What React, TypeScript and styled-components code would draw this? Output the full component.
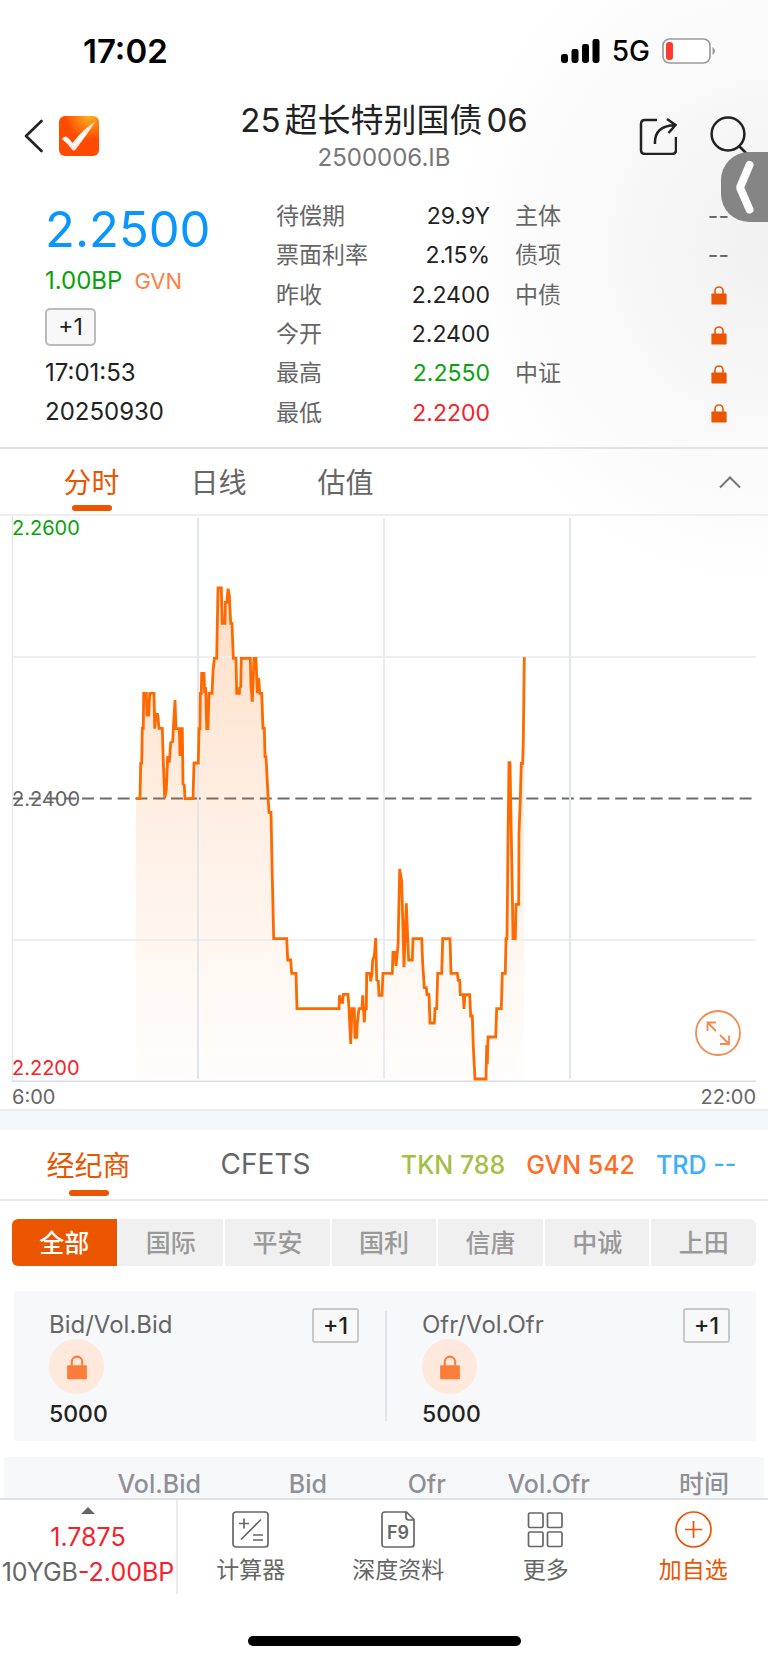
import React from 'react';
import styled, { createGlobalStyle } from 'styled-components';

const GlobalStyle = createGlobalStyle`
  * { box-sizing: border-box; }
  body {
    margin: 0;
    background: #fff;
    font-family: Inter, "Noto Sans CJK SC", sans-serif;
    color: #222;
  }
  button {
    margin: 0;
    padding: 0;
    border: 0;
    background: none;
    font: inherit;
    color: inherit;
    cursor: pointer;
  }
  svg { display: block; }
  dl, dt, dd, h1, p { margin: 0; font-weight: 400; }
`;

const ORANGE = '#eb5500';
const GREEN = '#08a30c';
const RED = '#f5222a';
const GREY = '#666';

const Shell = styled.div`
  position: relative;
  display: flex;
  flex-direction: column;
  height: 100vh;
  overflow: hidden;
  background: radial-gradient(ellipse 320px 340px at 100% 250px, #f1f1f1, #f7f7f7 40%, #fff 100%), #fff;
`;

const Content = styled.main`
  flex: 1;
  min-height: 0;
  overflow: hidden;
`;

const StatusBar = styled.div`
  display: flex;
  align-items: center;
  justify-content: space-between;
  height: 100px;
  padding: 2px 52px 0 83px;
  color: #000;
`;

const Clock = styled.time`
  font-size: 33px;
  font-weight: 600;
`;

const StatusIcons = styled.div`
  display: flex;
  align-items: center;
  gap: 12px;
  font-size: 28px;
  font-weight: 500;
`;

const Header = styled.header`
  display: grid;
  grid-template-columns: 1fr auto 1fr;
  align-items: center;
  height: 78px;
  padding: 0 18px;
`;

const HeaderSide = styled.div<{ $end?: boolean }>`
  display: flex;
  align-items: center;
  justify-content: ${(p) => (p.$end ? 'flex-end' : 'flex-start')};
  gap: ${(p) => (p.$end ? 33 : 16)}px;
  padding: 0 0 6px ${(p) => (p.$end ? 0 : 5)}px;
`;

const TitleBlock = styled.div`
  padding-bottom: 3px;
  text-align: center;
`;

const Title = styled.h1`
  display: flex;
  gap: 4px;
  font-size: 33px;
  line-height: 40px;
`;

const Code = styled.p`
  font-size: 24px;
  line-height: 35px;
  color: #777;
`;

const DrawerHandle = styled.button`
  position: absolute;
  top: 152px;
  right: 0;
  width: 47px;
  height: 70px;
  border-radius: 28px 0 0 28px;
  background: #858585;
`;

const Quote = styled.section`
  display: grid;
  grid-template-columns: 206px 1fr 1fr;
  column-gap: 25px;
  padding: 19px 39px 14px 45px;
  border-bottom: 2px solid #e2e2ea;
  font-size: 23px;
  line-height: 39px;
`;

const PriceColumn = styled.div`
  padding-top: 3px;
  font-size: 24px;
`;

const Price = styled.div`
  font-size: 49px;
  line-height: 60px;
  color: #0a96ff;
`;

const ChangeRow = styled.div`
  display: flex;
  gap: 12px;
  height: 48px;
  line-height: 42px;
  color: ${GREEN};
`;

const Side = styled.span`
  font-size: 22px;
  color: #ff7f45;
`;

const SettleButton = styled.button<{ $small?: boolean }>`
  display: block;
  width: ${(p) => (p.$small ? 47 : 51)}px;
  height: ${(p) => (p.$small ? 35 : 38)}px;
  border: 2px solid ${(p) => (p.$small ? '#c8c8c8' : '#bbb')};
  border-radius: ${(p) => (p.$small ? 3 : 5)}px;
  background: #f8f8f8;
  font-size: 23px;
  font-weight: ${(p) => (p.$small ? 500 : 400)};
  line-height: 30px;
  color: #222;
`;

const Stamp = styled.div`
  padding: 7px 0 2px;
`;

const Stats = styled.dl`
  display: grid;
  grid-auto-rows: 1fr;
`;

const StatRow = styled.div`
  display: flex;
  align-items: center;
  justify-content: space-between;
`;

const StatName = styled.dt`
  color: ${GREY};
`;

const StatValue = styled.dd<{ $color?: string }>`
  color: ${(p) => p.$color ?? '#222'};
`;

const ChartTabs = styled.div`
  display: flex;
  align-items: center;
  height: 67px;
  padding: 0 26px 0 28px;
  border-bottom: 2px solid #eee;
`;

const Tab = styled.button<{ $active?: boolean; $width: number }>`
  position: relative;
  width: ${(p) => p.$width}px;
  height: 100%;
  padding-bottom: 1px;
  font-size: 28px;
  color: ${(p) => (p.$active ? ORANGE : GREY)};
  &::after {
    content: '';
    display: ${(p) => (p.$active ? 'block' : 'none')};
    position: absolute;
    left: 50%;
    bottom: 3px;
    width: 40px;
    height: 6px;
    margin-left: -20px;
    border-radius: 3px;
    background: ${ORANGE};
  }
`;

const Collapse = styled.button`
  margin-left: auto;
`;

const ChartSection = styled.section`
  padding: 0 12px;
  font-size: 20px;
`;

const Plot = styled.div`
  position: relative;
  svg.plot { width: 100%; height: 566px; }
`;

const AxisLabel = styled.span<{ $at: 'top' | 'middle' | 'bottom'; $color: string }>`
  position: absolute;
  left: 0;
  top: ${(p) => ({ top: '0', middle: '50%', bottom: 'auto' })[p.$at]};
  bottom: ${(p) => (p.$at === 'bottom' ? '2px' : 'auto')};
  margin-top: ${(p) => (p.$at === 'middle' ? -12 : 0)}px;
  line-height: 24px;
  color: ${(p) => p.$color};
`;

const ExpandButton = styled.button`
  position: absolute;
  right: 15px;
  bottom: 26px;
`;

const TimeAxis = styled.div`
  display: flex;
  justify-content: space-between;
  padding-top: 3px;
  line-height: 24px;
  color: ${GREY};
`;

const Divider = styled.div`
  height: 21px;
  border-top: 2px solid #ebecef;
  background: #f6f7fa;
`;

const BrokerTabs = styled.div`
  display: flex;
  align-items: center;
  height: 71px;
  padding-right: 22px;
  border-bottom: 2px solid #ececec;
`;

const Counts = styled.div`
  display: flex;
  gap: 21px;
  margin-left: auto;
  font-size: 25px;
  font-weight: 500;
`;

const Count = styled.span<{ $color: string }>`
  min-width: 90px;
  color: ${(p) => p.$color};
`;

const Chips = styled.div`
  display: grid;
  grid-template-columns: repeat(7, 1fr);
  gap: 2px;
  margin: 18px 12px 25px;
  border-radius: 6px;
  overflow: hidden;
`;

const Chip = styled.button<{ $active?: boolean }>`
  height: 47px;
  padding-bottom: 3px;
  background: ${(p) => (p.$active ? ORANGE : '#f0f0f0')};
  font-size: 25px;
  font-weight: 500;
  color: ${(p) => (p.$active ? '#fff' : '#999')};
`;

const BestQuotes = styled.section`
  display: grid;
  grid-template-columns: 1fr 1fr;
  margin: 0 12px 16px 14px;
  padding: 20px 0;
  background: #f7f8fa;
  color: #222;
`;

const BestQuote = styled.div`
  display: grid;
  grid-template-columns: 1fr auto;
  height: 110px;
  padding: 0 26px 0 35px;
  & + & { border-left: 2px solid #e3e4e8; }
`;

const BestName = styled.span`
  font-size: 24px;
  line-height: 28px;
  color: ${GREY};
`;

const BestButtonCell = styled.div`
  height: 28px;
  margin-top: -3px;
`;

const LockBadge = styled.span`
  grid-column: 1 / -1;
  display: grid;
  place-items: center;
  width: 55px;
  height: 55px;
  border-radius: 50%;
  background: #ffe8dc;
`;

const Volume = styled.span`
  grid-column: 1 / -1;
  font-size: 23px;
  font-weight: 500;
  line-height: 27px;
  padding-top: 7px;
`;

const Deals = styled.table`
  width: calc(100% - 8px);
  margin: 0 4px;
  table-layout: fixed;
  border-collapse: collapse;
  background: #f7f8fa;
`;

const DealHead = styled.th<{ $width?: number }>`
  width: ${(p) => (p.$width ? `${p.$width}px` : 'auto')};
  height: 41px;
  padding: 15px 0 2px;
  text-align: right;
  font-size: 25px;
  font-weight: 500;
  line-height: 24px;
  color: #8f9096;
  &:last-child { padding-right: 35px; }
`;

const Footer = styled.footer`
  border-top: 2px solid #dfe0e6;
  background: #fff;
`;

const Toolbar = styled.nav`
  display: grid;
  grid-template-columns: 178px repeat(4, 1fr);
  height: 94px;
`;

const Ticker = styled.button`
  display: flex;
  flex-direction: column;
  align-items: center;
  padding-top: 7px;
  border-right: 2px solid #ececef;
  font-size: 25px;
  line-height: 35px;
  color: ${RED};
  white-space: nowrap;
  svg { margin-bottom: 6px; }
  span { color: ${GREY}; }
`;

const Tool = styled.button<{ $accent?: boolean }>`
  display: flex;
  flex-direction: column;
  align-items: center;
  padding: 11px 2px 0 0;
  font-size: 23px;
  line-height: 44px;
  color: ${(p) => (p.$accent ? ORANGE : GREY)};
`;

const HomeArea = styled.div`
  display: flex;
  justify-content: center;
  padding: 42px 0 17px;
`;

const HomeIndicator = styled.div`
  width: 273px;
  height: 10px;
  border-radius: 5px;
  background: #000;
`;

const Lock = ({ width = 20, color = ORANGE }: { width?: number; color?: string }) => (
  <svg width={width} height={width} viewBox="0 0 20 20">
    <path d="M6 9V6a4 4 0 0 1 8 0v3" fill="none" stroke={color} strokeWidth="1.6" />
    <rect x="2.4" y="8.6" width="15.2" height="10.8" rx="0.6" fill={color} />
  </svg>
);

const SERIES: [number, number][] = [
  [136, 798.7], [140, 798.7], [140.7, 763.3], [141.7, 763.3], [142.3, 728.3], [143.3, 728.3],
  [143.7, 693.3], [146.3, 693.3], [147, 715], [148.7, 715], [149.7, 693.3], [154, 693.3],
  [154.7, 728.7], [156, 714.3], [157.7, 714.3], [159, 728.3], [162.3, 728.3], [163.3, 761.7],
  [164.7, 798], [166.3, 790], [167.7, 756], [169.3, 762.7], [170.7, 742.7], [172.7, 741.7],
  [173.3, 728.7], [175, 700], [176, 728.7], [179.3, 728.7], [180, 756], [181.3, 728.7],
  [182.3, 728.7], [183, 784], [184.3, 785.3], [185, 798.7], [193, 798.7], [194, 763],
  [198.3, 763], [199, 728.7], [200, 728.7], [200.3, 693.3], [201.3, 693.3], [201.7, 673.3],
  [204, 673.3], [204.7, 693.3], [205.7, 687], [206.7, 728.7], [208, 728.7], [209, 693.3],
  [212, 693.3], [213, 671.7], [214.3, 658.3], [216.7, 658.3], [218, 588], [221.3, 588],
  [222.3, 623.3], [225, 623.3], [225.3, 602.3], [227, 602.3], [228, 588.7], [229.3, 595],
  [230.7, 623.3], [232, 623.3], [233.3, 658.3], [236, 658.3], [236.7, 693.3], [239.3, 693.3],
  [239.7, 687.7], [240.7, 686.7], [241.3, 658.3], [250.3, 658.3], [251, 686.7], [252.3, 701.7],
  [254, 658.3], [256, 658.3], [257.3, 693.3], [258.7, 678], [259.7, 693.3], [261.7, 693.3],
  [263, 728.3], [264.3, 728.3], [265, 756.7], [266, 756.7], [268.2, 798.7], [269, 812.3],
  [271, 812.3], [272, 863.3], [273.7, 938.7], [286.7, 938.7], [287.7, 960], [290.7, 960],
  [291.7, 973.3], [296, 973.3], [297, 1008.7], [339, 1008.7], [339.5, 995.3], [341, 1002.3],
  [342.7, 1002.3], [343.3, 994.3], [348, 994.3], [349, 1008.7], [350.7, 1044], [352, 1008.7],
  [354.3, 1008.7], [355, 1037.3], [356.7, 1037.3], [357.3, 1023.3], [359, 1008.7],
  [362, 1008.7], [362.7, 995.3], [364.3, 1022.3], [365, 1008.7], [366.3, 1008.7],
  [366.7, 973.3], [370, 973.3], [370.7, 981.3], [372, 973.3], [372.7, 960], [374.3, 956],
  [375.7, 938], [376.7, 980], [378.3, 981], [379, 995.3], [382, 995.3], [383, 973.3],
  [392.3, 973.3], [393, 952.3], [395, 952.3], [396, 966], [397.3, 952.3], [398, 946],
  [399.7, 869], [401.7, 881.7], [404, 967.3], [406.3, 903.3], [407.7, 938.7], [408.7, 960],
  [412.3, 960], [413, 938.7], [421.7, 938.7], [422.7, 963.3], [424.3, 987.7], [426.3, 987.7],
  [427, 994.7], [429, 994.7], [430, 1023], [434.3, 1023], [435, 1008.7], [436.7, 1008.7],
  [437.7, 973.3], [441.7, 973.3], [442.7, 938.7], [450, 938.7], [451, 973.3], [457.3, 973.3],
  [458.3, 980.3], [459.7, 980.3], [460.3, 994.7], [463.3, 994.7], [464, 1009], [465, 994.7],
  [469.7, 994.7], [470.7, 1016], [472.3, 1016], [473.3, 1046.7], [475, 1079], [486, 1079],
  [486.7, 1045], [487.3, 1064.3], [488, 1037], [495.7, 1037], [496.7, 1008.7], [501.3, 1008.7],
  [502.3, 973.3], [505.3, 973.3], [506, 938.7], [507, 938.7], [508, 840], [509, 762.7],
  [510, 762.7], [512, 873.3], [513, 938.7], [515.3, 938.7], [516, 904.3], [518.7, 904.3],
  [519, 833.3], [520.3, 800], [521.3, 763.3], [522.7, 763.3], [523.3, 740], [524.3, 657.3],
];

const LINE = SERIES.map(([x, y]) => `${x},${y}`).join(' ');

const PriceChart = () => (
  <svg className="plot" viewBox="12 516 744 566" preserveAspectRatio="none">
    <defs>
      <linearGradient id="area" x1="0" y1="588" x2="0" y2="1080" gradientUnits="userSpaceOnUse">
        <stop offset="0" stopColor="#ff6a00" stopOpacity="0.22" />
        <stop offset="0.5" stopColor="#ff6a00" stopOpacity="0.1" />
        <stop offset="1" stopColor="#ff6a00" stopOpacity="0.01" />
      </linearGradient>
    </defs>
    <path d="M12 798.5H752" stroke="#6c6c6c" strokeWidth="2" strokeDasharray="12 5.77" strokeDashoffset="1" />
    <polygon points={`136,1080 ${LINE} 524.3,1080`} fill="url(#area)" />
    <g fill="none" stroke="#dfe2ea">
      <path d="M12 657H756M12 940H756" stroke="#eceef2" strokeWidth="2" />
      <path d="M12.5 516V1081" strokeWidth="1" />
      <path d="M198 518V1079M570 518V1079" stroke="#e1e5ec" strokeWidth="2" />
      <path d="M384 518V1079" stroke="#e9ecf1" strokeWidth="2" />
      <path d="M12 1081.2H756" stroke="#dadce2" strokeWidth="1.6" />
    </g>
    <polyline points={LINE} fill="none" stroke="#ff6a00" strokeWidth="2.8" strokeLinejoin="miter" strokeMiterlimit="2" />
  </svg>
);

const BOND_STATS: { name: string; value: string; color?: string }[] = [
  { name: '待偿期', value: '29.9Y' },
  { name: '票面利率', value: '2.15%' },
  { name: '昨收', value: '2.2400' },
  { name: '今开', value: '2.2400' },
  { name: '最高', value: '2.2550', color: GREEN },
  { name: '最低', value: '2.2200', color: RED },
];

const RATINGS: { name: string; locked?: boolean }[] = [
  { name: '主体' },
  { name: '债项' },
  { name: '中债', locked: true },
  { name: '', locked: true },
  { name: '中证', locked: true },
  { name: '', locked: true },
];

const BROKERS = ['全部', '国际', '平安', '国利', '信唐', '中诚', '上田'];

export default function App() {
  return (
    <>
      <GlobalStyle />
      <Shell>
        <Content>
          <StatusBar>
            <Clock>17:02</Clock>
            <StatusIcons>
              <svg width="39" height="24" viewBox="0 0 39 24">
                <rect x="0" y="15" width="7" height="9" rx="2.4" />
                <rect x="10.5" y="10" width="7" height="14" rx="2.4" />
                <rect x="21" y="5" width="7" height="19" rx="2.4" />
                <rect x="31.5" y="0" width="7" height="24" rx="2.4" />
              </svg>
              <span>5G</span>
              <svg width="54" height="26" viewBox="0 0 54 26">
                <rect x="1" y="1" width="47" height="24" rx="6.5" fill="#fff" stroke="#9b9b9b" strokeWidth="1.7" />
                <rect x="4" y="4" width="7" height="18" rx="3" fill="#ff3b30" />
                <path d="M50.5 9q2.5 1.4 2.5 4t-2.5 4z" fill="#9b9b9b" />
              </svg>
            </StatusIcons>
          </StatusBar>

          <Header>
            <HeaderSide>
              <button aria-label="返回">
                <svg width="20" height="34" viewBox="0 0 20 34" fill="none" stroke="#222" strokeWidth="2.6" strokeLinecap="round">
                  <path d="M18.500 2L3 17l15.500 15" strokeLinejoin="round" />
                </svg>
              </button>
              <svg width="40" height="40" viewBox="0 0 40 40">
                <defs>
                  <radialGradient id="logo" cx="0.75" cy="0" r="0.6">
                    <stop offset="0" stopColor="#ffb020" />
                    <stop offset="1" stopColor="#ff4a00" />
                  </radialGradient>
                  <linearGradient id="tick" x1="0" y1="0" x2="0" y2="1">
                    <stop offset="0" stopColor="#fff" stopOpacity="0.7" />
                    <stop offset="0.5" stopColor="#fff" />
                    <stop offset="1" stopColor="#ffe6dc" />
                  </linearGradient>
                </defs>
                <rect width="40" height="40" rx="6" fill="url(#logo)" />
                <path d="M3 23q1-2.500 4-2.500 1.500 0 6.500 6.500Q25 12 36.500 5.500 29 17 17 33q-2 3-4.500 0Q8 27 3 23z" fill="url(#tick)" />
              </svg>
            </HeaderSide>
            <TitleBlock>
              <Title>
                <span>25</span>
                <span>超长特别国债</span>
                <span>06</span>
              </Title>
              <Code>2500006.IB</Code>
            </TitleBlock>
            <HeaderSide $end>
              <button aria-label="分享">
                <svg width="38" height="38" viewBox="0 0 38 38" fill="none" stroke="#222" strokeWidth="2.5">
                  <path d="M18 3H6Q2 3 2 7v26q0 4 4 4h27q4 0 4-4V20" />
                  <path d="M16 27Q15 9 36 8M28 2l8.500 6-7 8" />
                </svg>
              </button>
              <button aria-label="搜索">
                <svg width="40" height="40" viewBox="0 0 40 40" fill="none" stroke="#222" strokeWidth="2.5">
                  <circle cx="18" cy="18" r="16.400" />
                  <path d="M29 30l8 8" />
                </svg>
              </button>
            </HeaderSide>
          </Header>

          <Quote>
            <PriceColumn>
              <Price>2.2500</Price>
              <ChangeRow>
                1.00BP<Side>GVN</Side>
              </ChangeRow>
              <SettleButton>+1</SettleButton>
              <Stamp>
                <div>17:01:53</div>
                <div>20250930</div>
              </Stamp>
            </PriceColumn>
            <Stats>
              {BOND_STATS.map((s) => (
                <StatRow key={s.name}>
                  <StatName>{s.name}</StatName>
                  <StatValue $color={s.color}>{s.value}</StatValue>
                </StatRow>
              ))}
            </Stats>
            <Stats>
              {RATINGS.map((r, i) => (
                <StatRow key={i}>
                  <StatName>{r.name}</StatName>
                  <StatValue $color={GREY}>{r.locked ? <Lock /> : '--'}</StatValue>
                </StatRow>
              ))}
            </Stats>
          </Quote>

          <ChartTabs>
            <Tab $width={127} $active>分时</Tab>
            <Tab $width={127}>日线</Tab>
            <Tab $width={127}>估值</Tab>
            <Collapse aria-label="收起">
              <svg width="24" height="14" viewBox="0 0 24 14" fill="none" stroke="#777" strokeWidth="2">
                <path d="M2 12.500L12 2.500l10 10" />
              </svg>
            </Collapse>
          </ChartTabs>

          <ChartSection>
            <Plot>
              <PriceChart />
              <AxisLabel $at="top" $color={GREEN}>2.2600</AxisLabel>
              <AxisLabel $at="middle" $color={GREY}>2.2400</AxisLabel>
              <AxisLabel $at="bottom" $color={RED}>2.2200</AxisLabel>
              <ExpandButton aria-label="全屏">
                <svg width="46" height="46" viewBox="0 0 46 46" fill="none" stroke="#f58a50" strokeWidth="1.8">
                  <circle cx="23" cy="23" r="22" />
                  <path d="M21 21l-8-8M12.500 21v-8.500H21M25 25l8.500 8.500M34 25.500V34h-9" />
                </svg>
              </ExpandButton>
            </Plot>
            <TimeAxis>
              <span>6:00</span>
              <span>22:00</span>
            </TimeAxis>
          </ChartSection>
          <Divider />

          <BrokerTabs>
            <Tab $width={177} $active>经纪商</Tab>
            <Tab $width={177}>CFETS</Tab>
            <Counts>
              <Count $color="#a3bf45">TKN 788</Count>
              <Count $color="#ff6d24">GVN 542</Count>
              <Count $color="#3aaeff">TRD --</Count>
            </Counts>
          </BrokerTabs>

          <Chips>
            {BROKERS.map((b, i) => (
              <Chip key={b} $active={i === 0}>{b}</Chip>
            ))}
          </Chips>

          <BestQuotes>
            {['Bid/Vol.Bid', 'Ofr/Vol.Ofr'].map((name) => (
              <BestQuote key={name}>
                <BestName>{name}</BestName>
                <BestButtonCell>
                  <SettleButton $small>+1</SettleButton>
                </BestButtonCell>
                <LockBadge>
                  <Lock width={26} color="#fa7d3a" />
                </LockBadge>
                <Volume>5000</Volume>
              </BestQuote>
            ))}
          </BestQuotes>

          <Deals>
            <thead>
              <tr>
                <DealHead $width={197}>Vol.Bid</DealHead>
                <DealHead $width={126}>Bid</DealHead>
                <DealHead $width={119}>Ofr</DealHead>
                <DealHead $width={144}>Vol.Ofr</DealHead>
                <DealHead>时间</DealHead>
              </tr>
            </thead>
          </Deals>
        </Content>

        <Footer>
          <Toolbar>
            <Ticker>
              <svg width="14" height="7" viewBox="0 0 14 7">
                <path d="M0 7L7 0l7 7z" fill="#666" />
              </svg>
              <div>1.7875</div>
              <div><span>10YGB</span>-2.00BP</div>
            </Ticker>
            <Tool>
              <svg width="37" height="37" viewBox="0 0 37 37" fill="none" stroke="#666" strokeWidth="1.7">
                <rect x="1" y="1" width="35" height="35" rx="3" />
                <path d="M7 12.500h10M12 7.500v10M29 8.500L9 28.500M21 24h10M21 29h10" />
              </svg>
              计算器
            </Tool>
            <Tool>
              <svg width="34" height="37" viewBox="0 0 34 37" fill="none" stroke="#666" strokeWidth="1.700">
                <path d="M4 1h21.500L33 8.500V33q0 3-3 3H4q-3 0-3-3V4q0-3 3-3zM25 1v5q0 3 3 3h5" />
                <text x="17" y="27.500" textAnchor="middle" fontSize="18" fontWeight="600" fill="#666" stroke="none">F9</text>
              </svg>
              深度资料
            </Tool>
            <Tool>
              <svg width="37" height="37" viewBox="0 0 37 37" fill="none" stroke="#666" strokeWidth="1.700">
                <rect x="1.500" y="2" width="14.500" height="14.500" rx="1.500" />
                <rect x="20.500" y="2" width="14.500" height="14.500" rx="1.500" />
                <rect x="1.500" y="21" width="14.500" height="14.500" rx="1.500" />
                <rect x="20.500" y="21" width="14.500" height="14.500" rx="1.500" />
              </svg>
              更多
            </Tool>
            <Tool $accent>
              <svg width="37" height="37" viewBox="0 0 37 37" fill="none" stroke={ORANGE} strokeWidth="1.700">
                <circle cx="18.500" cy="18.500" r="17.500" />
                <path d="M10 18.500h17M18.500 10v17" />
              </svg>
              加自选
            </Tool>
          </Toolbar>
          <HomeArea>
            <HomeIndicator />
          </HomeArea>
        </Footer>

        <DrawerHandle aria-label="展开侧栏">
          <svg width="47" height="70" viewBox="0 0 47 70" fill="none" stroke="#fff" strokeWidth="8" strokeLinecap="round" strokeLinejoin="bevel">
            <path d="M28.500 13L19 35.500l9.500 22" />
          </svg>
        </DrawerHandle>
      </Shell>
    </>
  );
}
